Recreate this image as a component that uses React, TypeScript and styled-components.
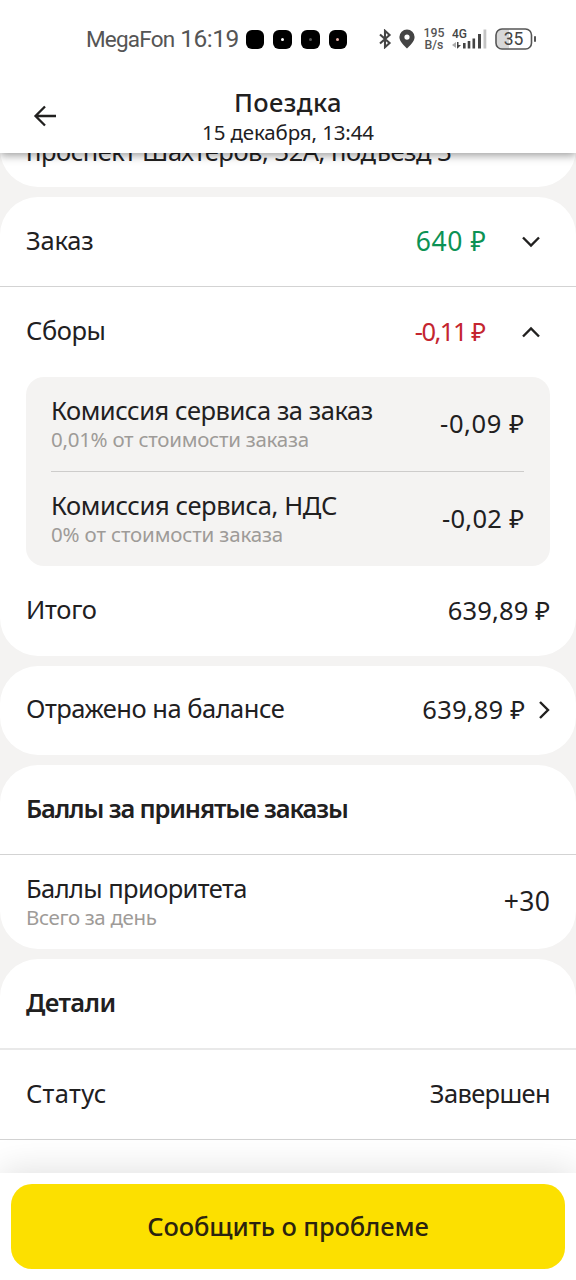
import React from "react";
import styled, { createGlobalStyle, css } from "styled-components";

const GlobalStyle = createGlobalStyle`
  * { box-sizing: border-box; }
  html, body { margin: 0; padding: 0; background: #f4f3f2; }
  body { font-family: "Noto Sans", "Open Sans", sans-serif; color: #21201f; -webkit-font-smoothing: antialiased; }
`;

const Screen = styled.div`
  display: flex;
  flex-direction: column;
  width: 576px;
  height: 1280px;
  overflow: hidden;
  background: #f4f3f2;
`;

const Top = styled.div`
  flex: none;
  height: 153px;
  background: #fff;
  position: relative;
  z-index: 2;
  box-shadow: 0 2px 9px rgba(0, 0, 0, 0.42);
`;

const StatusBar = styled.div`
  display: flex;
  align-items: center;
  height: 78px;
  padding: 0 38px 0 86px;
  color: #555;
  font-family: Roboto, sans-serif;
`;

const StatusText = styled.span<{ $size: number; $track?: number; $ml?: number }>`
  font-size: ${(p) => p.$size}px;
  line-height: 30px;
  letter-spacing: ${(p) => p.$track ?? 0}px;
  margin-left: ${(p) => p.$ml ?? 0}px;
  white-space: nowrap;
`;

const Dots = styled.div`
  display: flex;
  gap: 9px;
  margin-left: 7px;
`;

const Dot = styled.i<{ $core?: string }>`
  display: flex;
  align-items: center;
  justify-content: center;
  width: 18.6px;
  height: 19px;
  border-radius: 6px;
  background: #000;
  &::after {
    content: "";
    width: 3px;
    height: 3px;
    border-radius: 50%;
    background: ${(p) => p.$core ?? "#000"};
  }
`;

const StatusIcons = styled.div`
  display: flex;
  align-items: center;
  margin-left: auto;
`;

const PinIcon = styled.svg`
  margin-left: 7px;
`;

const Speed = styled.div`
  display: flex;
  flex-direction: column;
  align-items: center;
  width: 22px;
  margin-left: 8px;
  font-size: 12.3px;
  line-height: 12px;
  font-weight: 500;
`;

const SignalIcon = styled.svg`
  margin-left: 7px;
`;

const TitleBar = styled.div`
  display: grid;
  grid-template-columns: 90px 1fr 90px;
  align-items: center;
  height: 75px;
`;

const BackButton = styled.button`
  display: flex;
  border: 0;
  padding: 0 0 0 33px;
  background: none;
`;

const Titles = styled.div`
  display: flex;
  flex-direction: column;
  align-items: center;
  padding-top: 1px;
`;

const Txt = styled.span<{ $size?: number; $track?: number; $weight?: number; $color?: string; $lh?: number }>`
  font-size: ${(p) => p.$size ?? 25.5}px;
  line-height: ${(p) => p.$lh ?? 32}px;
  font-weight: ${(p) => p.$weight ?? 400};
  letter-spacing: ${(p) => p.$track ?? 0}px;
  white-space: nowrap;
  ${(p) => p.$color && css`color: ${p.$color};`}
`;

const Label = styled(Txt)`
  margin-bottom: 4px;
`;

const Amount = styled(Txt)`
  margin-bottom: 2px;
  margin-right: ${(p) => -(p.$track ?? 0)}px;
`;

const Note = styled(Txt).attrs({ $size: 20.5, $lh: 26, $color: "#9e9b98" })``;

const Content = styled.main`
  flex: 1;
  min-height: 0;
  display: flex;
  flex-direction: column;
  gap: 10px;
  overflow: hidden;
`;

const Card = styled.section<{ $first?: boolean; $last?: boolean }>`
  flex: ${(p) => (p.$last ? "1 0 auto" : "none")};
  background: #fff;
  border-radius: ${(p) => (p.$last ? "38px 38px 0 0" : p.$first ? "0 0 38px 38px" : "38px")};
  ${(p) => p.$first && css`margin-top: -40px; height: 74px; padding: 22px 26px 0;`}
`;

const Row = styled.div<{ $h: number; $line?: string; $lineH?: number; $lift?: number }>`
  display: flex;
  align-items: center;
  justify-content: space-between;
  height: ${(p) => p.$h}px;
  padding: 0 26px ${(p) => p.$lift ?? 0}px;
  ${(p) => p.$line && css`border-bottom: ${p.$lineH ?? 1}px solid ${p.$line};`}
`;

const Right = styled.div<{ $gap: number; $pad?: number }>`
  display: flex;
  align-items: center;
  gap: ${(p) => p.$gap}px;
  padding-right: ${(p) => p.$pad ?? 0}px;
`;

const Stack = styled.div`
  display: flex;
  flex-direction: column;
  margin-bottom: 2px;
`;

const FeeBox = styled.div`
  margin: 0 26px;
  padding: 0 26px 0 25px;
  height: 189px;
  border-radius: 18px;
  background: #f4f3f2;
`;

const FeeRow = styled.div<{ $line?: boolean }>`
  display: flex;
  align-items: center;
  justify-content: space-between;
  height: ${(p) => (p.$line ? 95 : 94)}px;
  border-bottom: ${(p) => (p.$line ? "1px solid #cdcccb" : "0")};
`;

const Footer = styled.footer`
  flex: none;
  position: relative;
  height: 107px;
  padding: 11px 11px 0;
  background: #fff;
  box-shadow: 0 -2px 34px rgba(0, 0, 0, 0.13);
`;

const ReportButton = styled.button`
  width: 554px;
  height: 85px;
  border: 0;
  border-radius: 21px;
  background: #fce000;
  color: #2b230f;
  font-family: inherit;
  padding: 0 0 2px;
`;

const Chevron = ({ dir }: { dir: "down" | "up" | "right" }) => {
  const d = { down: "M2 2.5 10 10.5 18 2.5", up: "M2 10.5 10 2.5 18 10.5", right: "M2 2 10 10 2 18" }[dir];
  const [w, h] = dir === "right" ? [12, 20] : [20, 13];
  return (
    <svg width={w} height={h} viewBox={`0 0 ${w} ${h}`} fill="none" stroke="#21201f" strokeWidth="2.4">
      <path d={d} />
    </svg>
  );
};

const LINE = "#d3d3d3";

export default function App() {
  return (
    <>
      <GlobalStyle />
      <Screen>
        <Top>
          <StatusBar>
            <StatusText $size={22.5} $track={-0.8}>MegaFon</StatusText>
            <StatusText $size={24.5} $track={-0.5} $ml={6}>16:19</StatusText>
            <Dots>
              <Dot />
              <Dot $core="#fff" />
              <Dot $core="#555" />
              <Dot $core="#e8b0a8" />
            </Dots>
            <StatusIcons>
              <svg width="14" height="20" viewBox="0 0 14 22" fill="none" stroke="#444" strokeWidth="2.3">
                <path d="M1.500 6 12 15.500 7 20V2L12 6.500 1.500 16" />
              </svg>
              <PinIcon width="16" height="20" viewBox="0 0 16 20">
                <path fillRule="evenodd" fill="#444" d="M8 .5a7.600 7.600 0 0 1 7.600 7.600C15.600 13 10.500 17 8 19.500 5.500 17 .4 13 .4 8.100A7.600 7.600 0 0 1 8 .5zm0 5a2.600 2.600 0 1 0 0 5.200 2.600 2.600 0 0 0 0-5.200z" />
              </PinIcon>
              <Speed>
                <span>195</span>
                <span>B/s</span>
              </Speed>
              <SignalIcon width="36" height="24" viewBox="0 0 36 24">
                <text x="0" y="11" fontFamily="Roboto" fontSize="12" fontWeight="500" fill="#444">4G</text>
                <g fill="#444">
                  <path d="M0 18l4-3v6z" fill="#aaa" />
                  <path d="M5 15h1.500v3H9l-3.500 3.500H5z" />
                  <rect x="11" y="16" width="2.600" height="5.500" />
                  <rect x="15.700" y="14" width="2.600" height="7.500" />
                  <rect x="20.500" y="11.500" width="2.600" height="10" />
                  <rect x="26" y="7" width="3" height="14.500" />
                  <rect x="31.500" y="2.500" width="2.800" height="19" fill="#c4c4c4" />
                </g>
              </SignalIcon>
              <SignalIcon width="43" height="22" viewBox="0 0 43 22">
                <path d="M7 1.500h7v19H7a5.500 5.500 0 0 1-5.500-5.500V7A5.500 5.500 0 0 1 7 1.500z" fill="#d8d8d8" />
                <rect x="1" y="1" width="35.500" height="20" rx="6" fill="none" stroke="#555" strokeWidth="1.600" />
                <rect x="39" y="8" width="2" height="6" rx="1" fill="#555" />
                <text x="18.500" y="17.300" textAnchor="middle" fontFamily="Roboto" fontSize="17.500" fill="#444">35</text>
              </SignalIcon>
            </StatusIcons>
          </StatusBar>
          <TitleBar>
            <BackButton aria-label="Назад">
              <svg width="24" height="22" viewBox="0 0 24 22" fill="none" stroke="#21201f" strokeWidth="2.300">
                <path d="M23 11H3M12 1.500 2.500 11 12 20.500" />
              </svg>
            </BackButton>
            <Titles>
              <Txt $weight={500} $track={0.4} $lh={31}>Поездка</Txt>
              <Txt $size={20.5} $track={-0.12} $lh={28}>15 декабря, 13:44</Txt>
            </Titles>
          </TitleBar>
        </Top>

        <Content>
          <Card $first>
            <Txt $track={-0.47}>проспект Шахтеров, 32А, подъезд 3</Txt>
          </Card>

          <Card>
            <Row $h={90} $line={LINE}>
              <Label $track={-0.2}>Заказ</Label>
              <Right $gap={35} $pad={9}>
                <Amount $size={26.5} $track={0.6} $color="#0c9254">640 ₽</Amount>
                <Chevron dir="down" />
              </Right>
            </Row>
            <Row $h={90}>
              <Label $track={-0.4}>Сборы</Label>
              <Right $gap={35} $pad={9}>
                <Amount $track={-1.5} $color="#c4252f">-0,11 ₽</Amount>
                <Chevron dir="up" />
              </Right>
            </Row>
            <FeeBox>
              <FeeRow $line>
                <Stack>
                  <Txt $track={-0.45}>Комиссия сервиса за заказ</Txt>
                  <Note $track={-0.27}>0,01% от стоимости заказа</Note>
                </Stack>
                <Amount $track={0.6}>-0,09 ₽</Amount>
              </FeeRow>
              <FeeRow>
                <Stack>
                  <Txt $track={-0.4}>Комиссия сервиса, НДС</Txt>
                  <Note $track={-0.16}>0% от стоимости заказа</Note>
                </Stack>
                <Amount $track={0.3}>-0,02 ₽</Amount>
              </FeeRow>
            </FeeBox>
            <Row $h={90}>
              <Label $track={-0.3}>Итого</Label>
              <Amount $track={0.15}>639,89 ₽</Amount>
            </Row>
          </Card>

          <Card>
            <Row $h={89} $lift={1}>
              <Label $track={-0.5}>Отражено на балансе</Label>
              <Right $gap={13}>
                <Amount $track={0.2}>639,89 ₽</Amount>
                <Chevron dir="right" />
              </Right>
            </Row>
          </Card>

          <Card>
            <Row $h={90} $line={LINE}>
              <Label $weight={600} $track={-1.15}>Баллы за принятые заказы</Label>
            </Row>
            <Row $h={94}>
              <Stack>
                <Txt $track={-0.6}>Баллы приоритета</Txt>
                <Note $track={-0.35}>Всего за день</Note>
              </Stack>
              <Amount $size={26.5} $track={0.4}>+30</Amount>
            </Row>
          </Card>

          <Card $last>
            <Row $h={91} $line="#e9e9e9" $lineH={2}>
              <Label $weight={600} $track={-0.6}>Детали</Label>
            </Row>
            <Row $h={90} $line={LINE}>
              <Label $track={0.3}>Статус</Label>
              <Label $track={-0.65}>Завершен</Label>
            </Row>
          </Card>
        </Content>

        <Footer>
          <ReportButton>
            <Txt $weight={500} $track={-0.1}>Сообщить о проблеме</Txt>
          </ReportButton>
        </Footer>
      </Screen>
    </>
  );
}
